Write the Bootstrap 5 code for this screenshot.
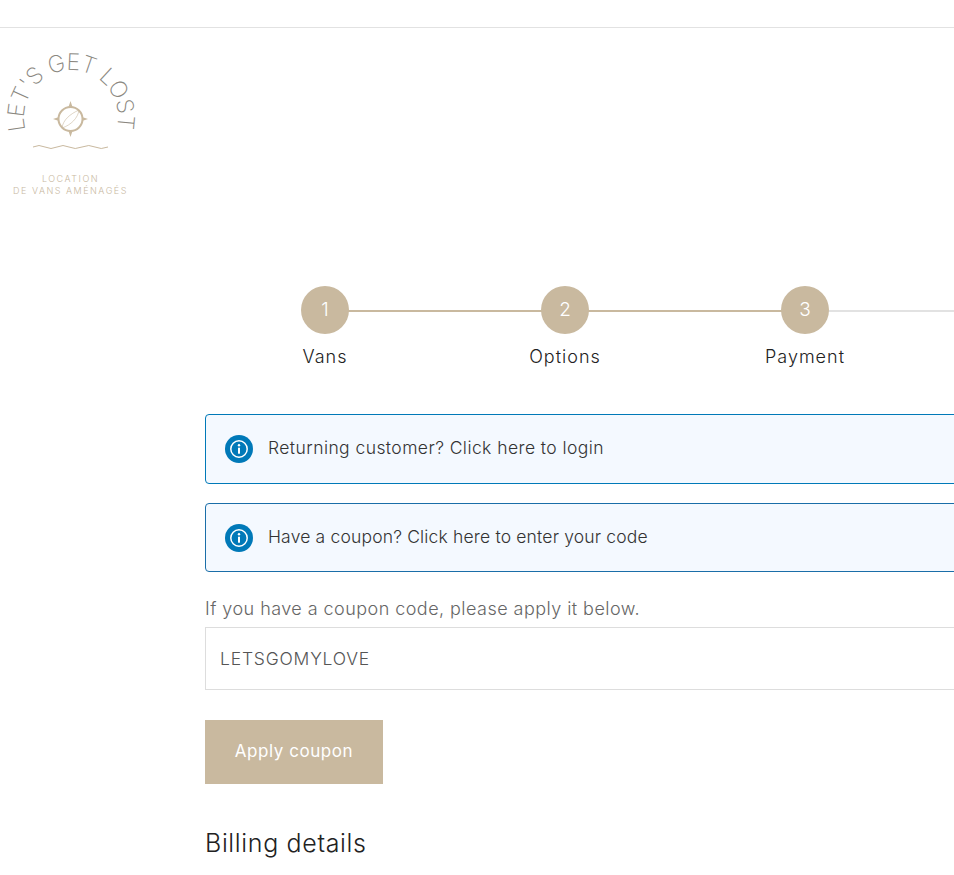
<!DOCTYPE html>
<html lang="en">
<head>
<meta charset="utf-8">
<title>Checkout</title>
<link href="https://cdn.jsdelivr.net/npm/bootstrap@5.3.0/dist/css/bootstrap.min.css" rel="stylesheet">
<style>
html,body{height:875px;overflow:hidden;background:#fff}
body{font-family:Inter,"Open Sans","Liberation Sans",sans-serif;color:#333;font-weight:300}
.topstrip{height:28px;border-bottom:1px solid #e2e2e2}
.logobox{height:177px;padding-top:17px}
.logobox svg{display:block}
.logotxt{font-family:Inter,sans-serif;font-weight:200;font-size:23px;fill:#8a8780}
.logosub{font-family:Inter,sans-serif;font-size:9px;fill:#c9b99f;letter-spacing:1.5px}
.mainwrap{margin-left:205px;width:960px;padding-top:81px}
.stepper{height:128px}
.stepitem{width:240px;position:relative}
.stepitem::after{content:"";position:absolute;left:120px;top:24px;width:240px;height:2px;background:#c9b99f}
.stepitem.pending::after{background:#e2e2e2}
.stepitem.lastone::after{display:none}
.stepdot{width:48px;height:48px;border-radius:50%;background:#c9b99f;color:#fff;font-size:19px;font-weight:300;position:relative;z-index:1}
.steplabel{margin-top:11px;font-size:18px;line-height:24px;color:#222;font-weight:300;letter-spacing:1px}
.noticebox{height:70px;border:1px solid #0079b8;border-radius:4px;background:#f4f9ff;padding:0 0 2px 19px;gap:15px;font-size:17.5px;letter-spacing:.43px;color:#333;font-weight:300;margin-bottom:19px}
.noticebox.second{height:69px;margin-bottom:0;border-color:#1a6ea8;padding-bottom:1px;letter-spacing:.17px}
.noticebox svg{position:relative;top:1px}
.couponhint{margin:25px 0 6px;font-size:18px;letter-spacing:.45px;line-height:24px;color:#666}
.couponinput{height:63px;border:1px solid #ddd;border-radius:0;padding:0 14px 1px;font-size:17.5px;letter-spacing:.8px;color:#555;font-weight:300}
.couponbtn{width:178px;height:64px;margin-top:30px;background:#c9b99f;color:#fff;border:0;border-radius:0;font-size:17px;letter-spacing:.55px;font-weight:400;display:block}
.billhead{margin:43px 0 0;font-size:25px;letter-spacing:.65px;line-height:32px;font-weight:300;color:#222}
</style>
</head>
<body>
<div class="topstrip"></div>
<div class="logobox">
<svg width="140" height="160" viewBox="0 0 140 160" role="img" aria-label="Let's Get Lost logo">
<defs><path id="arcpath" d="M25.8 85 A47 47 0 1 1 116.2 85"/></defs>
<text class="logotxt" textLength="172" lengthAdjust="spacing"><textPath href="#arcpath">LET'S GET LOST</textPath></text>
<g fill="none" stroke="#c9b99f">
<circle cx="70.5" cy="74" r="12" stroke-width="2"/>
<path d="M62 83 C63 75 70 69 79 65 C78 73 71 80 62 83Z" stroke-width=".6"/>
<path d="M33 102 q6 -3 12 0 t12 0 t12 0 t13 0 t13 0 t13 0" stroke-width="1"/>
</g>
<g fill="#c9b99f">
<path d="M70.5 56l2 6h-4zM70.5 92l2 -6h-4zM53 74l6 -2v4zM88 74l-6 -2v4z"/>
</g>
<text class="logosub" x="70.5" y="137" text-anchor="middle">LOCATION</text>
<text class="logosub" x="70.5" y="149" text-anchor="middle">DE VANS AMÉNAGÉS</text>
</svg>
</div>
<main class="mainwrap">
<div class="stepper d-flex">
<div class="stepitem d-flex flex-column align-items-center"><div class="stepdot d-flex align-items-center justify-content-center">1</div><div class="steplabel">Vans</div></div>
<div class="stepitem d-flex flex-column align-items-center"><div class="stepdot d-flex align-items-center justify-content-center">2</div><div class="steplabel">Options</div></div>
<div class="stepitem pending d-flex flex-column align-items-center"><div class="stepdot d-flex align-items-center justify-content-center">3</div><div class="steplabel">Payment</div></div>
<div class="stepitem lastone"></div>
</div>
<div class="noticebox d-flex align-items-center">
<svg width="28" height="28" viewBox="0 0 28 28" aria-hidden="true"><circle cx="14" cy="14" r="14" fill="#0079b8"/><circle cx="14" cy="14" r="8.2" fill="none" stroke="#fff" stroke-width="1.5"/><circle cx="14" cy="10.3" r="1.2" fill="#fff"/><rect x="13" y="12.7" width="2" height="6" fill="#fff"/></svg>
<span>Returning customer? Click here to login</span>
</div>
<div class="noticebox second d-flex align-items-center">
<svg width="28" height="28" viewBox="0 0 28 28" aria-hidden="true"><circle cx="14" cy="14" r="14" fill="#0079b8"/><circle cx="14" cy="14" r="8.2" fill="none" stroke="#fff" stroke-width="1.5"/><circle cx="14" cy="10.3" r="1.2" fill="#fff"/><rect x="13" y="12.7" width="2" height="6" fill="#fff"/></svg>
<span>Have a coupon? Click here to enter your code</span>
</div>
<p class="couponhint">If you have a coupon code, please apply it below.</p>
<input class="form-control couponinput" type="text" value="LETSGOMYLOVE" aria-label="Coupon code">
<button class="btn couponbtn" type="button">Apply coupon</button>
<h3 class="billhead">Billing details</h3>
</main>
</body>
</html>
